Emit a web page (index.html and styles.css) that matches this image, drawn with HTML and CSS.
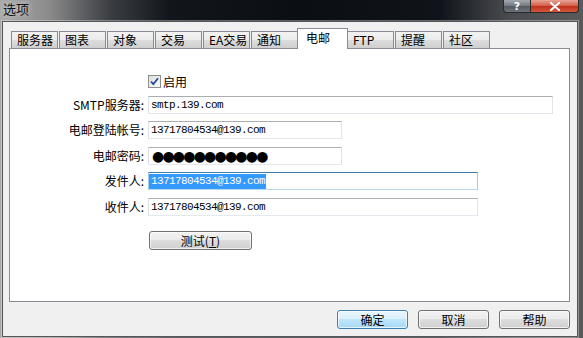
FILE: index.html
```html
<!DOCTYPE html>
<html>
<head>
  <meta charset="utf-8">
  <title>选项</title>
  <link rel="stylesheet" href="styles.css">
</head>
<body>

<div class='titlebar'>
  <span class='title'>选项</span>
  <div class='caption'>
    <span class='cap-btn help'>?</span>
    <span class='cap-btn close'>
      <svg width="12" height="9" viewBox="0 0 12 9"><path d="M2 1 L10 8 M10 1 L2 8" stroke="#fff" stroke-width="2.2" stroke-linecap="round"/></svg>
    </span>
  </div>
</div>

<div class='client'>
  <div class='tabs'>
    <span class='tab'>服务器</span>
    <span class='tab'>图表</span>
    <span class='tab'>对象</span>
    <span class='tab'>交易</span>
    <span class='tab'>EA交易</span>
    <span class='tab'>通知</span>
    <span class='tab active'>电邮</span>
    <span class='tab'>FTP</span>
    <span class='tab'>提醒</span>
    <span class='tab'>社区</span>
  </div>

  <div class='panel'>
    <div class='form'>
      <span></span>
      <label class='check'>
        <span class='box'>
          <svg width="11" height="11" viewBox="0 0 11 11"><path d="M2 5.5 L4.3 8.2 L9 2.3" fill="none" stroke="#23479c" stroke-width="1.8"/></svg>
        </span>
        启用
      </label>

      <span class='label'>SMTP服务器:</span>
      <div class='field wide'>smtp.139.com</div>

      <span class='label'>电邮登陆帐号:</span>
      <div class='field short'>13717804534@139.com</div>

      <span class='label'>电邮密码:</span>
      <div class='field short dots'>●●●●●●●●●●●</div>

      <span class='label'>发件人:</span>
      <div class='field mid focus'><span class='sel'>13717804534@139.com</span></div>

      <span class='label'>收件人:</span>
      <div class='field mid'>13717804534@139.com</div>

      <span></span>
      <button class='btn test'>测试(<u>T</u>)</button>
    </div>
  </div>

  <div class='buttons'>
    <button class='btn dlg default'>确定</button>
    <button class='btn dlg'>取消</button>
    <button class='btn dlg'>帮助</button>
  </div>
</div>

</body>
</html>
```

FILE: styles.css
```css
html, body {
  margin: 0;
}
body {
  width: 583px;
  height: 338px;
  overflow: hidden;
  font-family: "Noto Sans CJK SC", sans-serif;
  font-size: 12px;
  color: #000;
  background: linear-gradient(to right, #a9a9a9 0, #8a8a8a 50px, #3a3d42 110px, #12161c 170px, #0b0f14 300px, #10141a 440px, #4a4c50 510px, #5a5a5a 583px);
}

/* title bar */
.titlebar {
  display: flex;
  height: 21px;
}
.title {
  padding: 1px 0 0 3px;
  font-size: 13px;
  line-height: 16px;
  color: #111;
  text-shadow: 0 0 6px rgba(255,255,255,0.8);
}
.caption {
  display: flex;
  margin-left: auto;
  margin-right: 4px;
  height: 13px;
}
.cap-btn {
  display: flex;
  align-items: center;
  justify-content: center;
  box-sizing: border-box;
  height: 13px;
  border: 1px solid #2a2a2a;
  border-top: 0;
}
.help {
  width: 28px;
  border-radius: 0 0 0 4px;
  background: linear-gradient(#a3a8ae, #737880 50%, #555a61 51%, #6d737a);
  color: #fff;
  font: bold 11px "DejaVu Sans", sans-serif;
}
.close {
  width: 48px;
  border-left: 0;
  border-radius: 0 0 4px 0;
  background: linear-gradient(#e7a596, #d25a43 50%, #bf2f1b 51%, #d4573d);
}

/* dialog body */
.client {
  margin-left: 2px;
  width: 576px;
  height: 316px;
  box-sizing: border-box;
  border: 1px solid #555;
  background: #f0f0f0;
  box-shadow: 0 0 0 1px rgba(255,255,255,0.35);
}
.tabs {
  display: flex;
  align-items: flex-end;
  height: 26px;
  margin-left: 8px;
}
.tab {
  width: 47px;
  height: 17px;
  box-sizing: border-box;
  margin-right: 1px;
  padding-left: 5px;
  border: 1px solid #898c95;
  border-bottom: 0;
  line-height: 16px;
  background: linear-gradient(#f2f2f2, #ebebeb 50%, #dddddd 51%, #cfcfcf);
}
.tab.active {
  position: relative;
  z-index: 1;
  width: 51px;
  height: 21px;
  margin: 0 -1px -1px -2px;
  padding-left: 8px;
  line-height: 18px;
  background: #fff;
}
.panel {
  margin-left: 6px;
  width: 561px;
  height: 254px;
  box-sizing: border-box;
  padding-top: 26px;
  border: 1px solid #898c95;
  background: #fff;
}

/* email form */
.form {
  display: grid;
  grid-template-columns: 134px auto;
  column-gap: 4px;
  row-gap: 7.5px;
  align-items: center;
  justify-items: start;
}
.label {
  justify-self: end;
  line-height: 16px;
}
.check {
  display: flex;
  align-items: center;
  gap: 2px;
  height: 13px;
  line-height: 13px;
}
.box {
  display: flex;
  align-items: center;
  justify-content: center;
  width: 13px;
  height: 13px;
  box-sizing: border-box;
  border: 1px solid #8e8f8f;
  background: linear-gradient(135deg, #dedede, #fbfbfb);
}
.field {
  height: 18px;
  box-sizing: border-box;
  padding-left: 2px;
  border: 1px solid;
  border-color: #abadb3 #e2e3ea #e3e9ef #dbdfe6;
  background: #fff;
  font-family: "Liberation Mono", monospace;
  font-size: 11px;
  letter-spacing: -0.6px;
  line-height: 16px;
  white-space: nowrap;
  overflow: hidden;
}
.wide { width: 405px; }
.short { width: 194px; }
.mid { width: 330px; }
.dots {
  padding-left: 3px;
  font-family: "DejaVu Sans", sans-serif;
  font-size: 14px;
  letter-spacing: -1.8px;
}
.focus {
  padding-left: 0;
  border-color: #3d7bad #a4c9e3 #b7d9ed #a4c9e3;
}
.sel {
  display: inline-block;
  padding: 0 1px 0 2px;
  line-height: 15px;
  background: #3399ff;
  color: #fff;
}

/* buttons */
.btn {
  height: 19px;
  box-sizing: border-box;
  padding: 0;
  border: 1px solid #707070;
  border-radius: 3px;
  background: linear-gradient(#f2f2f2, #ebebeb 45%, #dddddd 50%, #cfcfcf);
  box-shadow: inset 0 0 0 1px rgba(255,255,255,0.7);
  font-family: "Noto Sans CJK SC", sans-serif;
  font-size: 12px;
  line-height: 17px;
  color: #000;
  text-align: center;
}
.test {
  width: 103px;
  margin: 8px 0 0 1px;
}
.buttons {
  display: flex;
  justify-content: flex-end;
  gap: 10px;
  margin-top: 8px;
  padding-right: 7px;
}
.dlg {
  width: 71px;
}
.default {
  border-color: #3c7fb1;
  background: linear-gradient(#eaf6fd, #d9f0fc 45%, #bee6fd 50%, #a7d9f5);
}
```
